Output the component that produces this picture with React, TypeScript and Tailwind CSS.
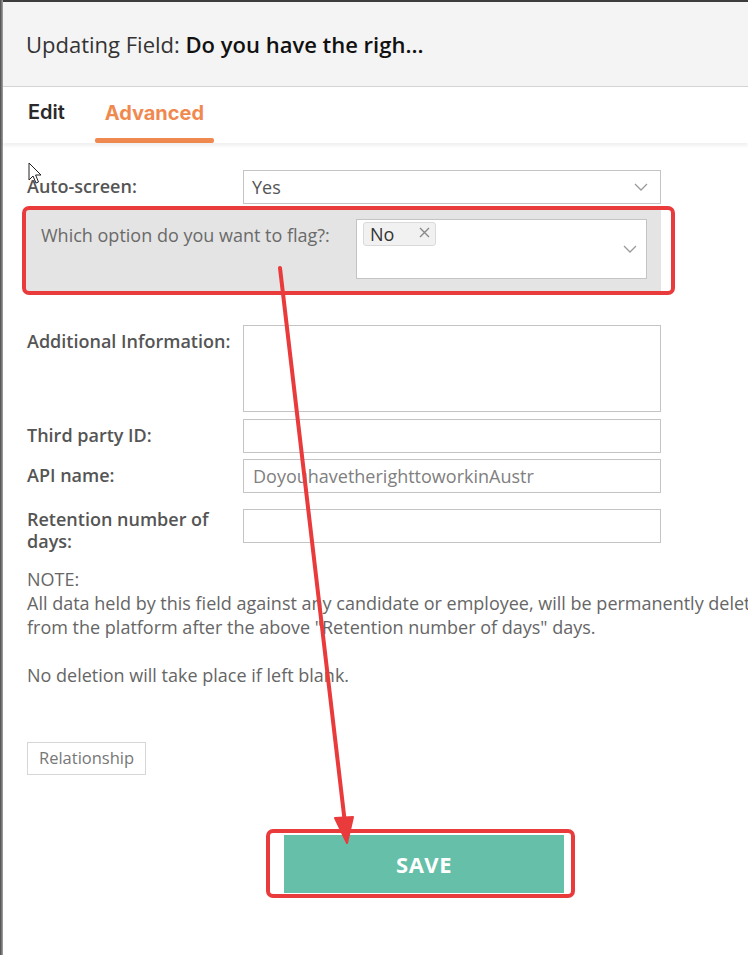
const font = { fontFamily: '"Open Sans", "Liberation Sans", sans-serif' };

function Chevron() {
  return (
    <svg width="14" height="8" viewBox="0 0 14 8" className="shrink-0">
      <polyline points="1,1 7,7 13,1" fill="none" stroke="#9a9a9a" strokeWidth="1.3" />
    </svg>
  );
}

function Row({ label, children, tall }: { label: string; children?: React.ReactNode; tall?: boolean }) {
  return (
    <div className="flex items-start">
      <div className={`w-[216px] shrink-0 pr-3 text-[18px] font-semibold leading-[21.5px] text-[#555] ${tall ? "mt-0" : "pt-[6px]"}`}>
        {label}
      </div>
      {children}
    </div>
  );
}

export default function App() {
  return (
    <div className="relative flex h-[955px] w-[748px] overflow-hidden bg-white" style={font}>
      <div className="w-[3px] shrink-0 bg-gradient-to-r from-[#4a4a4a] to-[#a8a8a8]" />
      <div className="flex min-w-0 flex-1 flex-col">
        <div className="h-[2px] bg-[#3c3c3c]" />
        {/* header */}
        <div className="flex h-[85px] items-center border-b border-[#d4d4d4] bg-[#f4f4f4] pl-[23px] text-[22px]">
          <span className="text-[#333]">Updating Field:&nbsp;</span>
          <span className="font-semibold text-[#111]">Do you have the righ...</span>
        </div>
        {/* tabs */}
        <div
          className="flex h-[56px] items-stretch pl-[25px] shadow-[0_3px_3px_rgba(0,0,0,0.06)]"
          style={{ fontFamily: 'Inter, "Open Sans", sans-serif' }}
        >
          <div className="flex items-center pb-[7px] text-[20px] font-semibold text-[#2a2a2a]">Edit</div>
          <div className="ml-[30px] flex w-[119px] flex-col items-center justify-end">
            <div className="flex flex-1 items-center text-[20px] font-bold text-[#f0894f]">Advanced</div>
            <div className="h-[5px] w-full rounded-[2px] bg-[#f0894f]" />
          </div>
        </div>

        {/* form */}
        <div className="flex w-[900px] flex-col pl-[24px]">
          <div className="mt-[27px]">
            <Row label="Auto-screen:">
              <div className="flex h-[34px] w-[418px] items-center justify-between border border-[#c4c4c4] bg-white pl-[8px] pr-[12px] text-[18px] text-[#555]">
                <span>Yes</span>
                <Chevron />
              </div>
            </Row>
          </div>

          <div className="-ml-[1px] mt-[5px] flex h-[83px] w-[635px] items-start bg-[#e4e4e4] pt-[10px]">
            <div className="w-[330px] pl-[15px] pt-[5px] text-[18px] leading-[22px] text-[#6a6a6a]">
              Which option do you want to flag?:
            </div>
            <div className="flex h-[60px] w-[291px] items-start justify-between border border-[#c4c4c4] bg-white pl-[6px] pr-[9px] pt-[2px]">
              <div className="flex h-[24px] w-[73px] items-center justify-between rounded-[3px] border border-[#dadada] bg-[#f1f1f1] pl-[6px] pr-[5px] text-[18px] text-[#333]">
                <span>No</span>
                <svg width="11" height="11" viewBox="0 0 11 11" className="-mt-[3px]">
                  <path d="M1 1 L10 10 M10 1 L1 10" stroke="#888" strokeWidth="1.4" />
                </svg>
              </div>
              <div className="pt-[23px]">
                <Chevron />
              </div>
            </div>
          </div>

          <div className="mt-[33px]">
            <Row label="Additional Information:">
              <div className="h-[87px] w-[418px] border border-[#c4c4c4] bg-white" />
            </Row>
          </div>
          <div className="mt-[7px]">
            <Row label="Third party ID:">
              <div className="h-[34px] w-[418px] border border-[#c4c4c4] bg-white" />
            </Row>
          </div>
          <div className="mt-[6px]">
            <Row label="API name:">
              <div className="flex h-[34px] w-[418px] items-center border border-[#c4c4c4] bg-white pl-[9px] text-[18px] text-[#808080]">
                DoyouhavetherighttoworkinAustr
              </div>
            </Row>
          </div>
          <div className="mt-[16px]">
            <Row label="Retention number of days:" tall>
              <div className="h-[34px] w-[418px] border border-[#c4c4c4] bg-white" />
            </Row>
          </div>

          <div className="mt-[15px] w-[770px] text-[18px] leading-[24px] text-[#666]">
            <div>NOTE:</div>
            <div>
              All data held by this field against any candidate or employee, will be permanently deleted from the
              platform after the above "Retention number of days" days.
            </div>
            <div className="h-[24px]" />
            <div>No deletion will take place if left blank.</div>
          </div>

          <div className="mt-[55px]">
            <div className="inline-flex h-[33px] items-center border border-[#d6d6d6] bg-white px-[11px] text-[16.5px] text-[#777]">
              Relationship
            </div>
          </div>

          <div className="ml-[257px] mt-[60px] flex h-[58px] w-[280px] items-center justify-center bg-[#66bfa8] text-[22px] font-bold tracking-[0.5px] text-white">
            SAVE
          </div>
        </div>
      </div>

      {/* annotations */}
      <svg className="pointer-events-none absolute left-0 top-0" width="748" height="955" viewBox="0 0 748 955">
        <rect x="24" y="208" width="649" height="85" rx="5" fill="none" stroke="#ea3b3c" strokeWidth="4" />
        <rect x="268" y="831" width="305" height="65" rx="5" fill="none" stroke="#ea3b3c" strokeWidth="4" />
        <line x1="280" y1="268" x2="346" y2="832" stroke="#ea3b3c" strokeWidth="4" strokeLinecap="round" />
        <path d="M335 818 L347 843 L353 817 Z" fill="#ea3b3c" stroke="#ea3b3c" strokeWidth="2" strokeLinejoin="round" />
        <path
          d="M29 163 L29 180 L33 176 L36 183 L38.5 182 L35.6 175 L41 175 Z"
          fill="#fff"
          stroke="#222"
          strokeWidth="1"
          strokeLinejoin="round"
        />
      </svg>
    </div>
  );
}
